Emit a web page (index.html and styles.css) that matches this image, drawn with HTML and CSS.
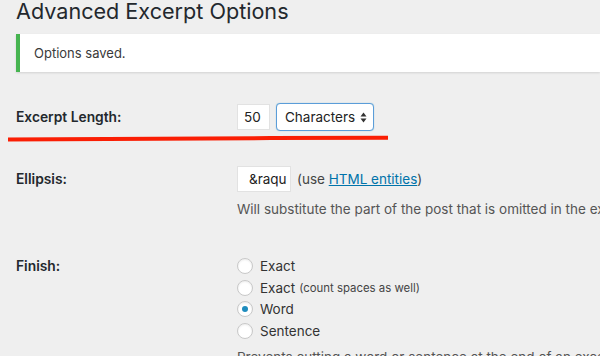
FILE: index.html
```html
<!DOCTYPE html>
<html>
<head>
<meta charset="utf-8">
<link rel="stylesheet" href="styles.css">
</head>
<body>
<div class="wrap">
  <h1 class="title">Advanced Excerpt Options</h1>
  <div class="notice"><p>Options saved.</p></div>
  <div class="form">
    <div class="row row-length">
      <div class="label">Excerpt Length:</div>
      <div class="field inline">
        <span class="input num">50</span>
        <span class="select">Characters <span class="arrows"><svg width="7" height="11" viewBox="0 0 7 11"><path d="M3.5 0.5 L6.5 4.5 L0.5 4.5 Z M3.5 10.5 L6.5 6.5 L0.5 6.5 Z" fill="#333"/></svg></span></span>
      </div>
    </div>
    <div class="row row-ellipsis">
      <div class="label">Ellipsis:</div>
      <div class="field">
        <div class="inline">
          <span class="input ell">&amp;raqu</span>
          <span class="hint">(use <a href="#">HTML entities</a>)</span>
        </div>
        <p class="desc">Will substitute the part of the post that is omitted in the excerpt.</p>
      </div>
    </div>
    <div class="row row-finish">
      <div class="label">Finish:</div>
      <div class="field">
        <div class="radios">
          <label class="radio"><span class="dot"></span>Exact</label>
          <label class="radio"><span class="dot"></span>Exact <small>(count spaces as well)</small></label>
          <label class="radio"><span class="dot on"></span>Word</label>
          <label class="radio"><span class="dot"></span>Sentence</label>
        </div>
        <p class="desc desc2">Prevents cutting a word or sentence at the end of an excerpt.</p>
      </div>
    </div>
  </div>
  <svg class="redline" width="400" height="12" viewBox="0 0 400 12"><path d="M8 6.4 C120 5.8 260 5 388 4.7" stroke="#fa1e04" stroke-width="4" fill="none" stroke-linecap="butt"/></svg>
</div>
</body>
</html>
```
FILE: styles.css
```css
html, body {
  margin: 0;
  padding: 0;
  background: #efefef;
  font-family: Inter, "Liberation Sans", sans-serif;
  color: #2a2a2a;
  overflow: hidden;
}
.wrap {
  position: relative;
  padding-left: 16px;
  width: 584px;
  height: 356px;
  overflow: hidden;
}
.title {
  margin: 0;
  font-size: 21.6px;
  font-weight: 400;
  line-height: 26px;
  color: #23282d;
  margin-top: -2.5px;
}
.notice {
  margin-top: 10.5px;
  background: #fff;
  border-left: 4px solid #46b450;
  box-shadow: 0 1px 2px rgba(0,0,0,0.12);
  height: 38px;
  display: flex;
  align-items: center;
}
.notice p {
  margin: 0 0 0 14px;
  font-size: 13px;
  color: #3a3a3a;
}
.form {
  margin-top: 31px;
}
.row {
  display: flex;
}
.label {
  flex: 0 0 221px;
  font-size: 13.8px;
  font-weight: 600;
  color: #23282d;
}
.field {
  font-size: 13.5px;
  color: #444;
  min-width: 0;
}
.inline {
  display: flex;
  align-items: center;
}
.row-length { align-items: center; height: 28px; }
.input {
  display: inline-flex;
  align-items: center;
  background: #fff;
  border: 1px solid #e2e2e2;
  box-sizing: border-box;
  font-size: 13.5px;
  color: #222;
  flex-shrink: 0;
}
.num { width: 33px; padding-left: 6px; height: 26px; }
.select {
  margin-left: 6px;
  display: inline-flex;
  align-items: center;
  height: 28px;
  box-sizing: border-box;
  width: 98px;
  flex-shrink: 0;
  border: 1px solid #5b9dd9;
  border-radius: 4px;
  background: #fff;
  padding-left: 8px;
  font-size: 13.5px;
  color: #222;
  box-shadow: 0 0 1px rgba(30,140,190,0.5);
}
.arrows { margin-left: 5px; display: inline-flex; }
.row-ellipsis { margin-top: 35px; }
.row-ellipsis .label { padding-top: 5px; }
.ell { width: 54px; height: 26px; padding-left: 11px; }
.hint { margin-left: 6px; white-space: nowrap; }
.hint a { color: #0073aa; }
.desc {
  margin: 9px 0 0 0;
  white-space: nowrap;
  font-size: 13.5px;
  color: #555;
}
.row-finish { margin-top: 38px; }
.row-finish .label { padding-top: 3px; }
.radios { display: flex; flex-direction: column; }
.radio {
  display: flex;
  align-items: center;
  height: 21.7px;
  font-size: 13.5px;
  color: #333;
  white-space: nowrap;
}
.radio small { font-size: 11.4px; margin-left: 4px; color: #444; }
.dot {
  width: 16px;
  height: 16px;
  box-sizing: border-box;
  border: 1px solid #c8c8c8;
  border-radius: 50%;
  background: #fff;
  margin-right: 7px;
  box-shadow: inset 0 1px 2px rgba(0,0,0,0.08);
  display: flex;
  align-items: center;
  justify-content: center;
}
.dot.on::after {
  content: "";
  width: 6px;
  height: 6px;
  border-radius: 50%;
  background: #1e8cbe;
}
.desc2 { margin-top: 7px; }
.redline {
  position: absolute;
  left: 0;
  top: 133px;
}
```
